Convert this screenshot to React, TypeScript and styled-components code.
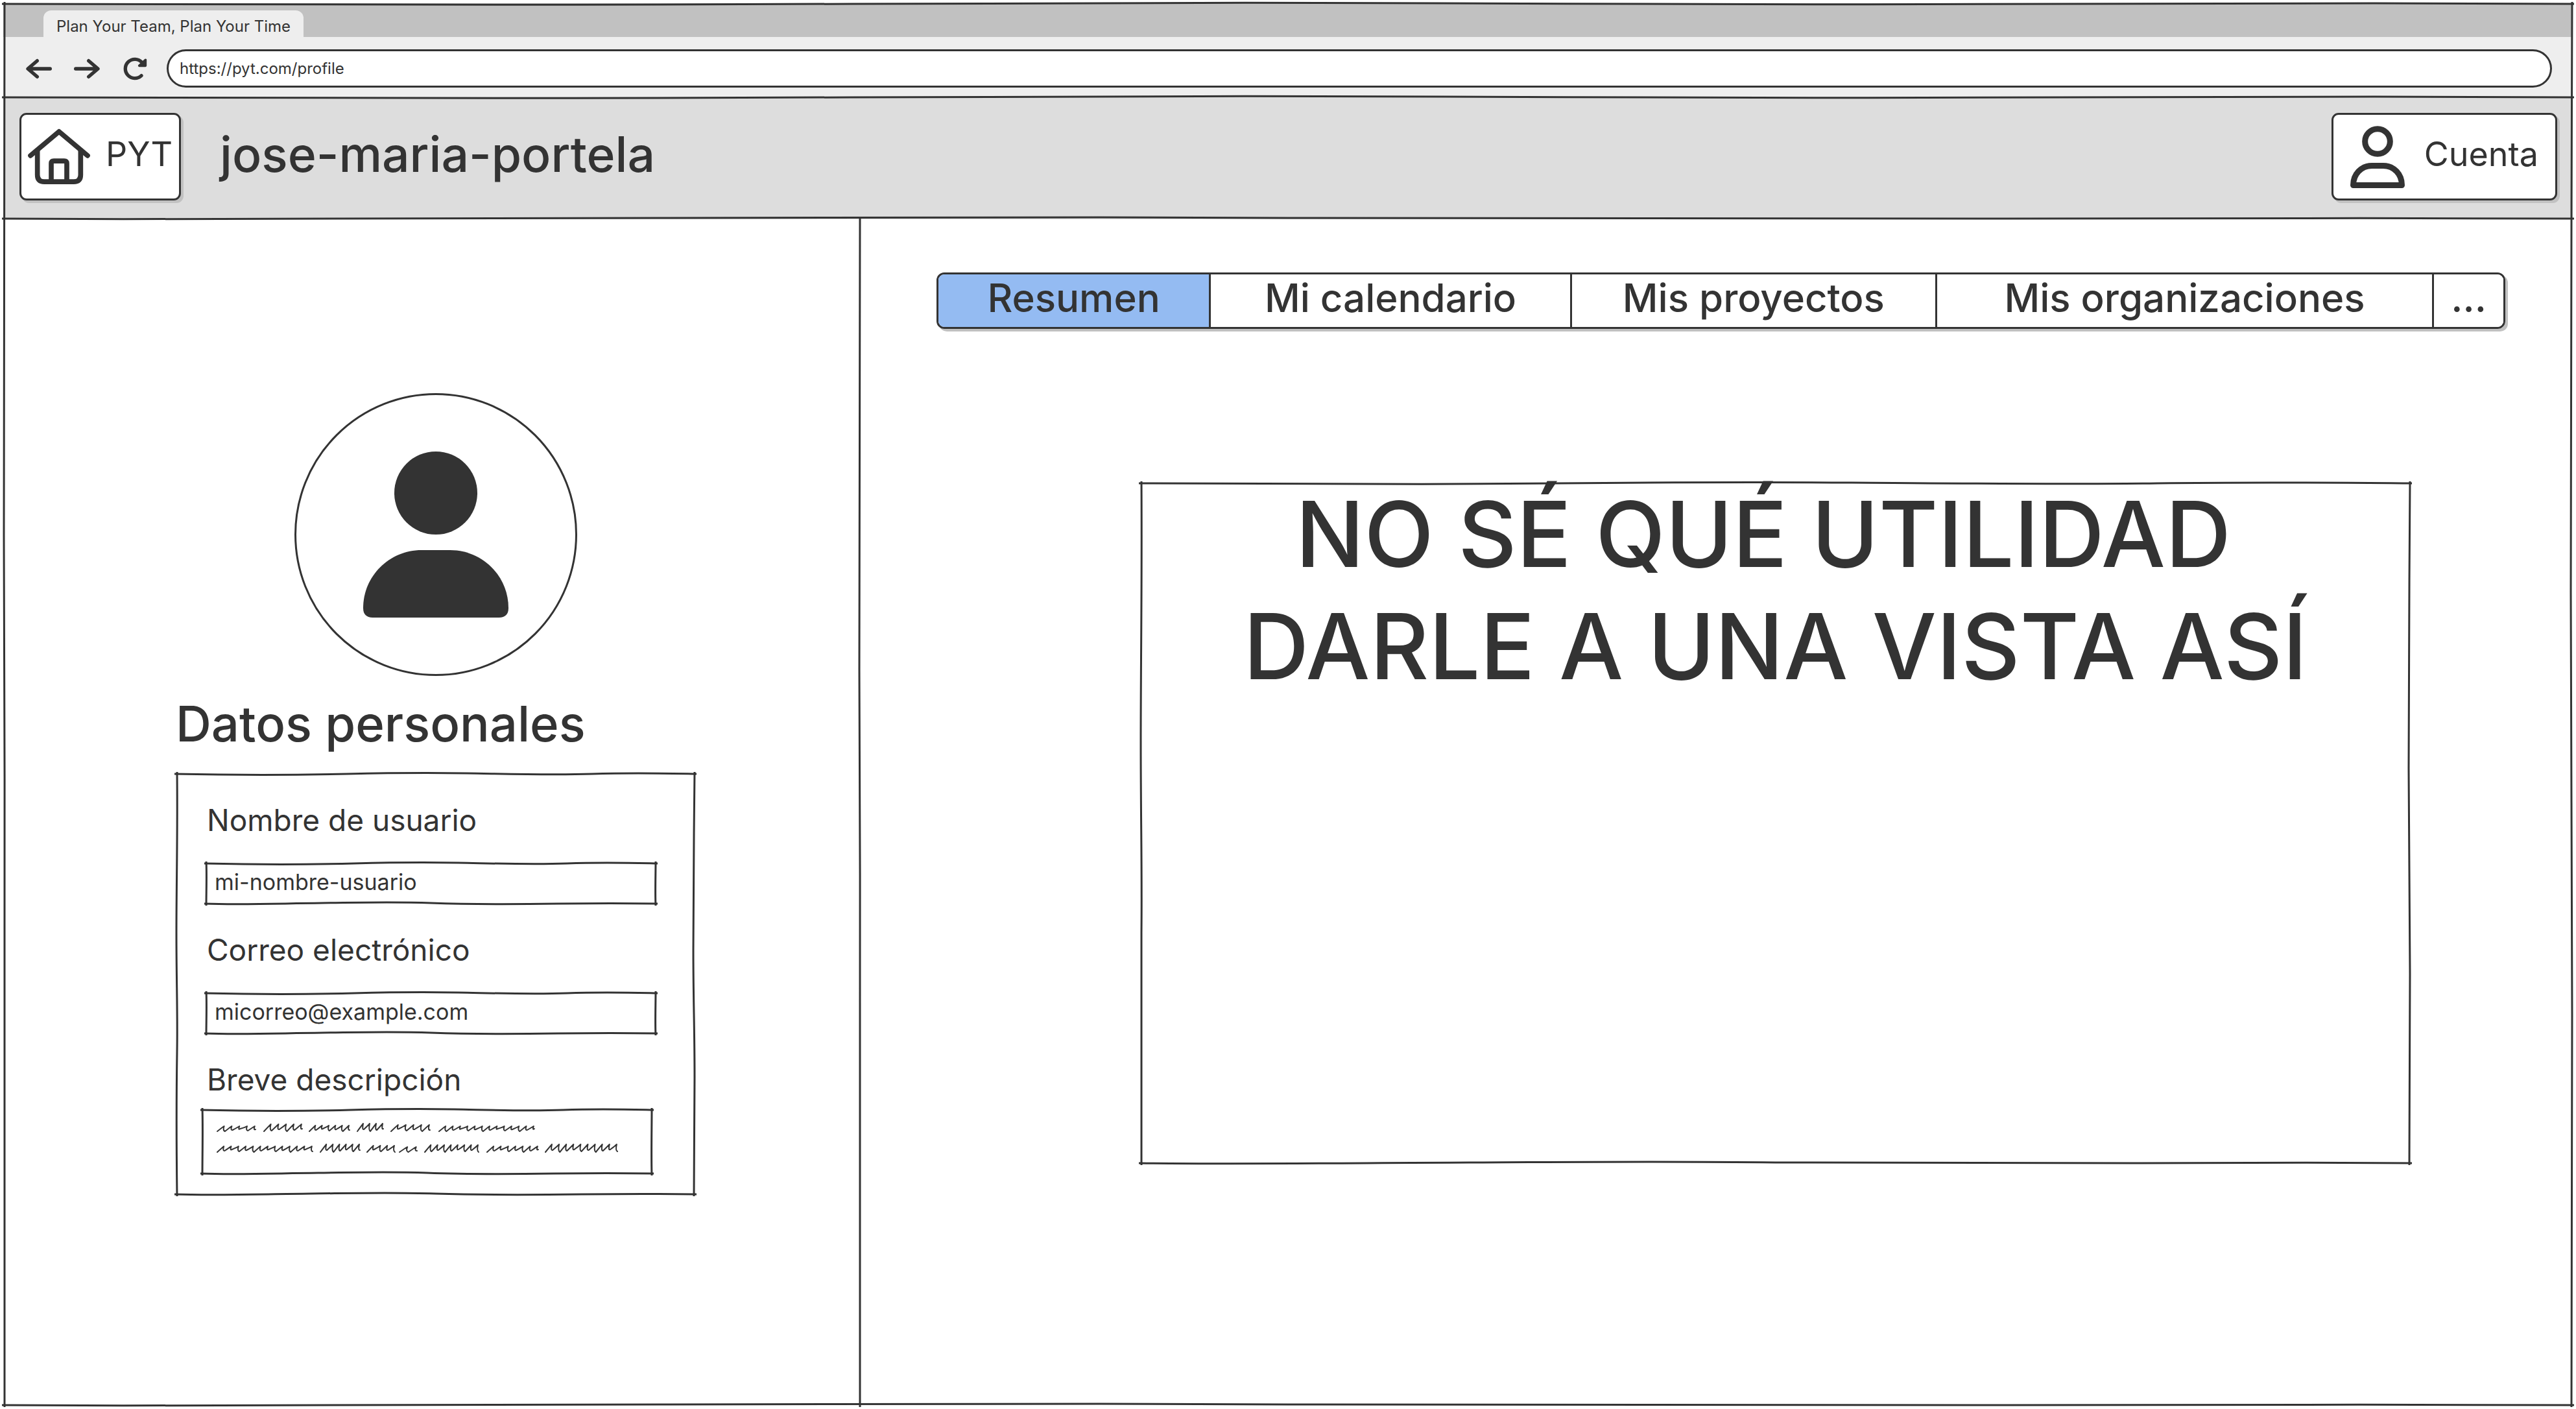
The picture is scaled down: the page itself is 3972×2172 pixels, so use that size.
import React from 'react';
import styled, { createGlobalStyle, css } from 'styled-components';

const ink = '#333333';
const sans = '"Inter", "Liberation Sans", sans-serif';

const GlobalStyle = createGlobalStyle`
  *, *::before, *::after { box-sizing: border-box; }
  body { margin: 0; background: #ffffff; color: ${ink}; font-family: ${sans}; }
  h1, h2, p { margin: 0; font-weight: 500; }
  button, input, textarea { font-family: inherit; color: inherit; }
`;

/* ---------- hand-drawn strokes ---------- */

type Side = 'top' | 'right' | 'bottom' | 'left';

const Stroke = styled.svg<{ $side: Side }>`
  position: absolute;
  pointer-events: none;
  overflow: visible;
  fill: none;
  stroke: ${ink};
  stroke-width: 3px;
  ${({ $side }) =>
    $side === 'top' || $side === 'bottom'
      ? css`left: -2px; width: calc(100% + 4px); height: 11px; ${$side}: -4px;`
      : css`top: -2px; height: calc(100% + 4px); width: 11px; ${$side}: -4px;`}
`;

const waves: Record<Side, string> = {
  top: 'M0 5 C120 7 220 7 330 5 S480 3 560 4 S720 7 800 5 S930 4 1000 5',
  bottom: 'M0 6 C80 8 150 6 260 5 S420 3 500 5 S680 7 780 6 S920 5 1000 6',
  left: 'M6 0 C7 150 5 260 5 380 S7 560 6 660 S5 880 6 1000',
  right: 'M6 0 C5 140 4 300 4 420 S6 600 6 720 S5 900 5 1000',
};

const shortWaves: Partial<Record<Side, string>> = {
  left: 'M5 0 C6 300 5 700 5 1000',
  right: 'M6 0 C6 300 5 700 6 1000',
};

function Edge({ side, short }: { side: Side; short?: boolean }) {
  const flat = side === 'top' || side === 'bottom';
  const wave = (short && shortWaves[side]) || waves[side];
  return (
    <Stroke $side={side} viewBox={flat ? '0 0 1000 11' : '0 0 11 1000'} preserveAspectRatio="none" aria-hidden="true">
      <path d={wave} vectorEffect="non-scaling-stroke" />
    </Stroke>
  );
}

function SketchFrame({ short }: { short?: boolean }) {
  return (
    <>
      <Edge side="top" />
      <Edge side="right" short={short} />
      <Edge side="bottom" />
      <Edge side="left" short={short} />
    </>
  );
}

/* ---------- browser window ---------- */

const Window = styled.div`
  position: relative;
  display: flex;
  flex-direction: column;
  margin: 5px;
  min-height: calc(100vh - 10px);
`;

const TabStrip = styled.div`
  display: flex;
  padding: 11px 62px 0;
  background: #c1c1c1;
`;

const BrowserTab = styled.div`
  padding: 8px 20px 0;
  border-radius: 12px 12px 0 0;
  background: #eeeeee;
  font-size: 24px;
  line-height: 33px;
`;

const BrowserBar = styled.div`
  display: flex;
  align-items: center;
  gap: 29px;
  padding: 19px 32px 14px 35px;
  background: #eeeeee;
`;

const BrowserNav = styled.div`
  display: flex;
  gap: 34px;
`;

const IconButton = styled.button`
  display: flex;
  padding: 0;
  border: 0;
  background: none;
`;

const UrlInput = styled.input`
  flex: 1;
  min-width: 0;
  height: 59px;
  padding: 0 17px;
  border: 3px solid ${ink};
  border-radius: 30px;
  background: #ffffff;
  font-size: 24px;
`;

/* ---------- app header ---------- */

const Header = styled.header`
  position: relative;
  display: flex;
  align-items: center;
  gap: 60px;
  padding: 25px 24px 29px 25px;
  background: #dddddd;
`;

const HeaderButton = styled.button<{ $roomy?: boolean }>`
  display: flex;
  align-items: center;
  gap: ${({ $roomy }) => ($roomy ? 30 : 24)}px;
  height: 135px;
  padding: 0 ${({ $roomy }) => ($roomy ? 26 : 10)}px;
  border: 3px solid ${ink};
  border-radius: 11px;
  background: #ffffff;
  box-shadow: 4px 4px 0 #c1c1c1;
  font-size: 52px;
  line-height: 64px;
`;

const ButtonText = styled.span`
  padding-bottom: 8px;
`;

const PageTitle = styled.h1`
  flex: 1;
  padding-bottom: 8px;
  font-size: 75px;
  line-height: 96px;
`;

/* ---------- body ---------- */

const Main = styled.main`
  flex: 1;
  display: grid;
  grid-template-columns: 1319fr 2643fr;
`;

const ProfilePanel = styled.aside`
  padding: 268px 252px 80px 266px;
`;

const ContentPanel = styled.section`
  position: relative;
  padding: 82px 104px 80px 120px;
`;

const Avatar = styled.div`
  display: flex;
  align-items: center;
  justify-content: center;
  width: 436px;
  height: 436px;
  margin: 0 auto 25px;
  border: 3px solid ${ink};
  border-radius: 50%;
`;

const SectionTitle = styled.h2`
  margin-bottom: 29px;
  font-size: 76px;
  line-height: 96px;
`;

const ProfileForm = styled.form`
  position: relative;
  display: flex;
  flex-direction: column;
  gap: 40px;
  padding: 42px 60px 32px 40px;
`;

const Field = styled.div<{ $gap: number }>`
  display: flex;
  flex-direction: column;
  gap: ${({ $gap }) => $gap}px;
`;

const FieldLabel = styled.label`
  padding-left: 8px;
  font-size: 46px;
  line-height: 60px;
`;

const InputBox = styled.div`
  position: relative;
  display: flex;
  margin-left: 6px;
`;

const AreaBox = styled.div`
  position: relative;
  display: flex;
  margin-right: 6px;
`;

const TextInput = styled.input`
  width: 100%;
  height: 64px;
  padding: 0 14px 6px;
  border: 0;
  background: none;
  font-size: 34px;
`;

const TextArea = styled.textarea`
  display: block;
  width: 100%;
  height: 100px;
  border: 0;
  background: none;
  resize: none;
`;

const Scribble = styled.svg`
  position: absolute;
  top: 14px;
  left: 20px;
  pointer-events: none;
  fill: none;
  stroke: ${ink};
  stroke-width: 2px;
  stroke-linejoin: round;
  stroke-linecap: round;
`;

const Tabs = styled.nav`
  display: grid;
  grid-template-columns: 418fr 558fr 564fr 768fr 110fr;
  height: 87px;
  border: 3px solid ${ink};
  border-radius: 12px;
  box-shadow: 4px 4px 0 #c1c1c1;
  overflow: hidden;
`;

const Tab = styled.button<{ $active?: boolean }>`
  padding: 0 0 10px;
  border: 0;
  background: ${({ $active }) => ($active ? '#94bbf2' : '#ffffff')};
  font-size: 60px;
  font-weight: 500;
  line-height: 70px;
  white-space: nowrap;

  & + & {
    border-left: 3px solid ${ink};
  }
`;

const SummaryCard = styled.article`
  position: relative;
  display: flow-root;
  min-height: 1050px;
  margin: 237px 146px 0 314px;
`;

const Notice = styled.p`
  margin-top: -7px;
  font-size: 140px;
  line-height: 173px;
  text-align: center;
`;

/* ---------- icons ---------- */

const Glyph = styled.svg`
  display: block;
  fill: none;
  stroke: ${ink};
  stroke-linecap: round;
  stroke-linejoin: round;
`;

const BackIcon = () => (
  <Glyph width="40" height="40" viewBox="60 78 120 120" strokeWidth="16">
    <path d="M172 138H70M112 101L69 138L112 175" />
  </Glyph>
);

const ForwardIcon = () => (
  <Glyph width="40" height="40" viewBox="288 78 120 120" strokeWidth="16">
    <path d="M296 138H398M356 101L399 138L356 175" />
  </Glyph>
);

const ReloadIcon = () => (
  <Glyph width="40" height="40" viewBox="500 78 120 120" strokeWidth="16">
    <path d="M590 170A44 44 0 1 1 592 108" />
    <path d="M609 97V124H580Z" fill={ink} strokeWidth="11" />
  </Glyph>
);

const HomeIcon = () => (
  <Glyph width="96" height="87" viewBox="72 422 288 260" strokeWidth="23">
    <path d="M84 547L216 436L348 547" />
    <path d="M116 522V636Q116 668 148 668H284Q316 668 316 636V522" />
    <path d="M180 666V584Q180 572 192 572H240Q252 572 252 584V666" />
  </Glyph>
);

const AccountIcon = () => (
  <Glyph width="84" height="96" viewBox="378 588 252 288" strokeWidth="27">
    <circle cx="504" cy="660" r="58" />
    <path d="M391.5 862.5C391.5 812 428 772.5 478 772.5H530C580 772.5 616.5 812 616.5 862.5Z" />
  </Glyph>
);

const PersonIcon = () => (
  <svg width="224" height="256" viewBox="414 348 672 768" fill={ink} aria-hidden="true">
    <circle cx="750" cy="540" r="192" />
    <path d="M684 804H816C965 804 1086 924 1086 1072Q1086 1116 1042 1116H458Q414 1116 414 1072C414 924 535 804 684 804Z" />
  </svg>
);

/* Squiggled placeholder words: [start, end] of each word on its line. */
const scribbleLines: [number, number][][] = [
  [[4, 63], [76, 135], [146, 208], [220, 260], [272, 332], [346, 493]],
  [[4, 151], [163, 224], [235, 278], [285, 312], [324, 407], [420, 499], [510, 621]],
];

function scribbleWord([from, to]: [number, number], base: number, seed: number) {
  const steps = Math.max(2, Math.round((to - from) / 11));
  const pitch = (to - from) / steps;
  let d = `M${from} ${base}`;
  for (let i = 0; i < steps; i += 1) {
    const rise = 8 + ((seed * 3 + i * 5) % 5);
    const drop = (seed + i * 7) % 5;
    const x = from + pitch * i;
    d += ` Q${x + pitch * 0.7} ${base - rise * 0.8} ${x + pitch * 0.9} ${base - rise}`;
    d += ` Q${x + pitch * 0.7} ${base - rise * 0.2} ${x + pitch} ${base - drop}`;
  }
  return d;
}

const ScribbleText = () => (
  <Scribble width="640" height="64" viewBox="0 0 640 64" aria-hidden="true">
    {scribbleLines.map((line, row) =>
      line.map((word, i) => <path key={`${row}-${i}`} d={scribbleWord(word, 20 + row * 32, i + row * 2)} />),
    )}
  </Scribble>
);

/* ---------- page ---------- */

const tabs = ['Resumen', 'Mi calendario', 'Mis proyectos', 'Mis organizaciones', '...'];

export default function App() {
  return (
    <>
      <GlobalStyle />
      <Window>
        <TabStrip>
          <BrowserTab>Plan Your Team, Plan Your Time</BrowserTab>
        </TabStrip>
        <BrowserBar>
          <BrowserNav>
            <IconButton aria-label="Atrás"><BackIcon /></IconButton>
            <IconButton aria-label="Adelante"><ForwardIcon /></IconButton>
            <IconButton aria-label="Recargar"><ReloadIcon /></IconButton>
          </BrowserNav>
          <UrlInput aria-label="Dirección" defaultValue="https://pyt.com/profile" />
        </BrowserBar>

        <Header>
          <HeaderButton>
            <HomeIcon />
            <ButtonText>PYT</ButtonText>
          </HeaderButton>
          <PageTitle>jose-maria-portela</PageTitle>
          <HeaderButton $roomy>
            <AccountIcon />
            <ButtonText>Cuenta</ButtonText>
          </HeaderButton>
          <Edge side="top" />
          <Edge side="bottom" />
        </Header>

        <Main>
          <ProfilePanel>
            <Avatar><PersonIcon /></Avatar>
            <SectionTitle>Datos personales</SectionTitle>
            <ProfileForm>
              <Field $gap={36}>
                <FieldLabel htmlFor="username">Nombre de usuario</FieldLabel>
                <InputBox>
                  <TextInput id="username" defaultValue="mi-nombre-usuario" />
                  <SketchFrame short />
                </InputBox>
              </Field>
              <Field $gap={36}>
                <FieldLabel htmlFor="email">Correo electrónico</FieldLabel>
                <InputBox>
                  <TextInput id="email" type="email" defaultValue="micorreo@example.com" />
                  <SketchFrame short />
                </InputBox>
              </Field>
              <Field $gap={16}>
                <FieldLabel htmlFor="bio">Breve descripción</FieldLabel>
                <AreaBox>
                  <TextArea id="bio" />
                  <ScribbleText />
                  <SketchFrame short />
                </AreaBox>
              </Field>
              <SketchFrame />
            </ProfileForm>
          </ProfilePanel>

          <ContentPanel>
            <Tabs>
              {tabs.map((tab, i) => (
                <Tab key={tab} $active={i === 0}>{tab}</Tab>
              ))}
            </Tabs>
            <SummaryCard>
              <Notice>
                NO SÉ QUÉ UTILIDAD{'\u00a0'}
                <br />
                DARLE A UNA VISTA ASÍ
              </Notice>
              <SketchFrame />
            </SummaryCard>
            <Edge side="left" />
          </ContentPanel>
        </Main>
        <SketchFrame />
      </Window>
    </>
  );
}
